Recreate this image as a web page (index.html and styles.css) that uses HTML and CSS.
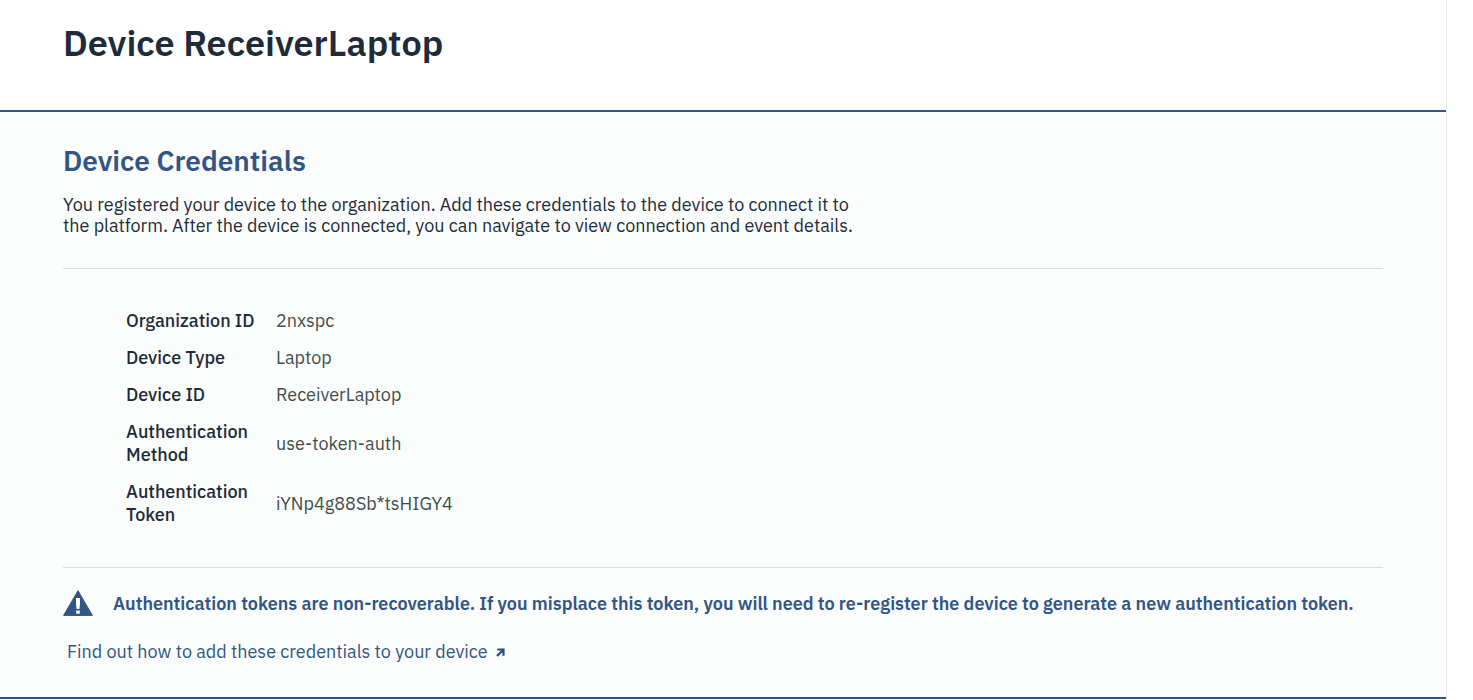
FILE: index.html
```html
<!DOCTYPE html>
<html lang="en">
<head>
<meta charset="utf-8">
<title>Device ReceiverLaptop</title>
<link rel="stylesheet" href="styles.css">
</head>
<body>
<main class="page">
  <header class="header"><h1 class="title">Device ReceiverLaptop</h1></header>
  <section class="panel">
    <h2 class="subtitle">Device Credentials</h2>
    <p class="intro">You registered your device to the organization. Add these credentials to the device to connect it to<br>the platform. After the device is connected, you can navigate to view connection and event details.</p>
    <dl class="credentials">
      <dt>Organization ID</dt><dd>2nxspc</dd>
      <dt>Device Type</dt><dd>Laptop</dd>
      <dt>Device ID</dt><dd>ReceiverLaptop</dd>
      <dt>Authentication<br>Method</dt><dd>use-token-auth</dd>
      <dt>Authentication<br>Token</dt><dd>iYNp4g88Sb*tsHIGY4</dd>
    </dl>
    <div class="warning">
      <svg class="warning-icon" width="30" height="27" viewBox="0 0 30 27"><path d="M15 .7 29.4 25.4H.6Z" fill="#325583" stroke="#325583" stroke-linejoin="round"/><path d="M13 8h4v6l-.6 5h-2.8L13 14zM13.2 20.5h3.6v3.3h-3.6z" fill="#fff"/></svg>
      <strong>Authentication tokens are non-recoverable. If you misplace this token, you will need to re-register the device to generate a new authentication token.</strong>
    </div>
    <a class="help">Find out how to add these credentials to your device<svg class="arrow" width="9" height="9" viewBox="0 0 9 9"><path d="M1.3 1.5H7.5V7.7M7.2 1.8 1 8" fill="none" stroke="#294c78" stroke-width="2.2"/></svg></a>
  </section>
</main>
</body>
</html>
```
FILE: styles.css
```css
* { box-sizing: border-box; }
body { margin: 0; background: #fff; color: #1e2b3a; font: 18px/21px "IBM Plex Sans", "Noto Sans", sans-serif; -webkit-font-smoothing: antialiased; }
.page { width: 1447px; height: 700px; border-right: 1px solid #ececec; overflow: hidden; }
.header { height: 112px; padding: 18px 63px; border-bottom: 2px solid #325583; }
.title { margin: 0; font-size: 36px; line-height: 50px; font-weight: 600; }
.panel { height: 587px; padding: 32px 63px 0; background: #fbfdfc; border-bottom: 2px solid #325583; }
.subtitle { margin: 0; color: #325583; font-size: 28px; line-height: 34px; font-weight: 600; }
.intro { margin: 16px 0 0; height: 75px; border-bottom: 1px solid #dadddc; white-space: nowrap; }
.credentials { margin: 0; padding: 40px 63px 0; height: 299px; display: grid; grid-template-columns: 130px 1fr; column-gap: 20px; row-gap: 14px; line-height: 23px; align-content: start; align-items: center; border-bottom: 1px solid #dadddc; }
.credentials dt { font-weight: 500; white-space: nowrap; }
.credentials dd { margin: 0; color: #434d4b; }
.warning { display: flex; align-items: center; gap: 20px; height: 27px; margin-top: 22px; color: #325583; white-space: nowrap; }
.warning strong { font-weight: 600; }
.warning-icon { flex: none; }
.help { display: flex; align-items: center; gap: 8px; margin: 24px 0 0 4px; color: #325583; }
.arrow { margin-top: 2px; }
```
